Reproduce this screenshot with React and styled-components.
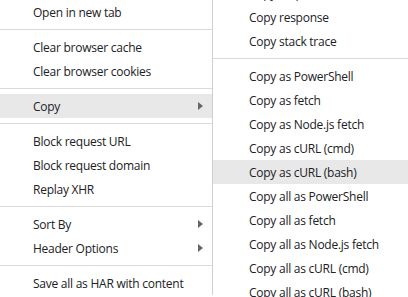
import React from 'react';
import styled, { createGlobalStyle } from 'styled-components';

const GlobalStyle = createGlobalStyle`
html, body {
    margin: 0;
    padding: 0;
    background: #ffffff;
}
body {
    width: 408px;
    height: 297px;
    overflow: hidden;
    font-family: "Open Sans", "Noto Sans", "Liberation Sans", sans-serif;
    font-size: 12px;
    color: #202124;
}
`

const Page = styled.div`
display: flex;
align-items: flex-start;
width: 408px;
height: 297px;
overflow: hidden;
`

const Menu = styled.div`
display: flex;
flex-direction: column;
width: ${(props) => props.width}px;
margin-top: ${(props) => props.offset || 0}px;
border-right: ${(props) => (props.edge ? '1px solid #cfcfcf' : 'none')};
background: #ffffff;
flex-shrink: 0;
`

const Item = styled.div`
display: flex;
align-items: center;
justify-content: space-between;
height: 24px;
padding-left: ${(props) => props.indent}px;
padding-right: 9px;
background: ${(props) => (props.active ? '#e8e8e8' : 'transparent')};
white-space: nowrap;
letter-spacing: -0.25px;

span {
    padding-top: 1px;
}
`

const Arrow = styled.i`
width: 0;
height: 0;
border-top: 4px solid transparent;
border-bottom: 4px solid transparent;
border-left: 5px solid #666666;
`

const Separator = styled.div`
height: 1px;
margin: 5px 0;
background: #dadada;
`

const mainItems = [
    ['Open in new tab'],
    '-',
    ['Clear browser cache'],
    ['Clear browser cookies'],
    '-',
    ['Copy', true, true],
    '-',
    ['Block request URL'],
    ['Block request domain'],
    ['Replay XHR'],
    '-',
    ['Sort By', true],
    ['Header Options', true],
    '-',
    ['Save all as HAR with content'],
]

const copyItems = [
    ['Copy response headers'],
    ['Copy response'],
    ['Copy stack trace'],
    '-',
    ['Copy as PowerShell'],
    ['Copy as fetch'],
    ['Copy as Node.js fetch'],
    ['Copy as cURL (cmd)'],
    ['Copy as cURL (bash)', false, true],
    ['Copy all as PowerShell'],
    ['Copy all as fetch'],
    ['Copy all as Node.js fetch'],
    ['Copy all as cURL (cmd)'],
    ['Copy all as cURL (bash)'],
]

function MenuList({ items, indent }) {
    return items.map((item, i) => {
        if (item === '-') return <Separator key={i} />
        const [label, sub, active] = item
        return (
            <Item key={i} indent={indent} active={active}>
                <span>{label}</span>
                {sub && <Arrow />}
            </Item>
        )
    })
}

export default function App() {
    return (
        <>
            <GlobalStyle />
            <Page>
                <Menu width={212} edge>
                    <MenuList items={mainItems} indent={33} />
                </Menu>
                <Menu width={195} offset={-19}>
                    <MenuList items={copyItems} indent={36} />
                </Menu>
            </Page>
        </>
    );
}
